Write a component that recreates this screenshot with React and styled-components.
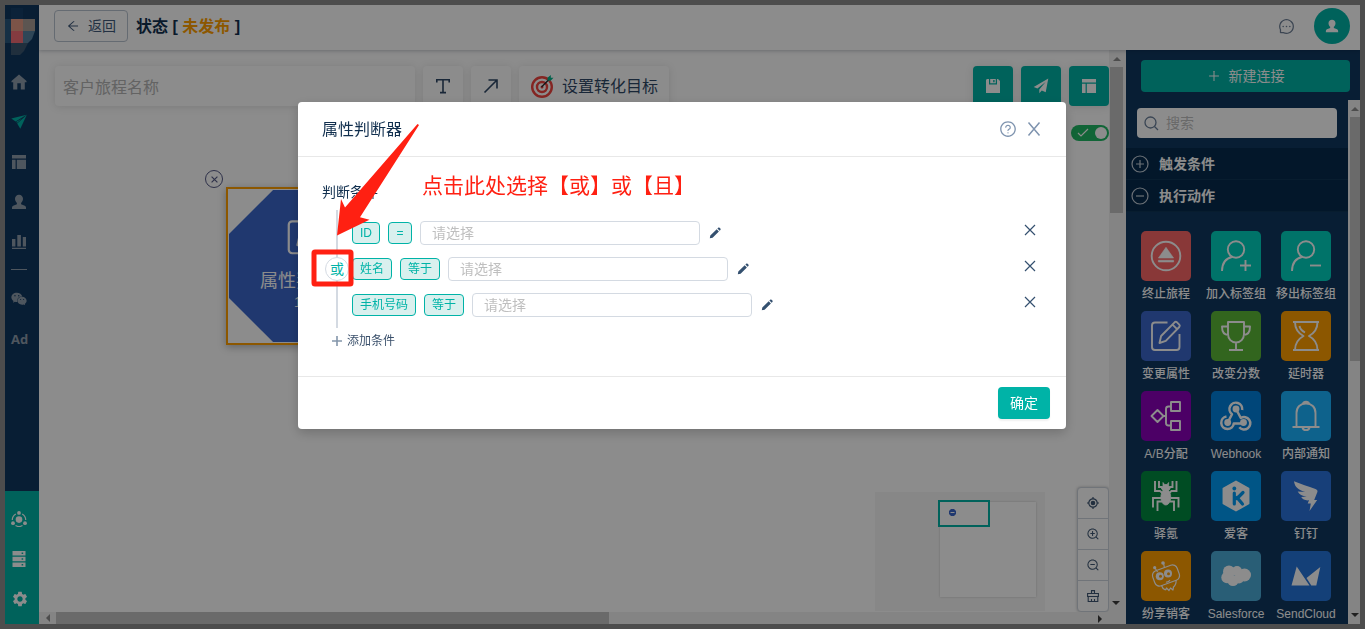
import React from 'react'
import styled, { createGlobalStyle, css } from 'styled-components'
import {
  AiOutlineArrowLeft,
  AiOutlineMessage,
  AiOutlinePlus,
  AiOutlineQuestionCircle,
  AiOutlineZoomIn,
  AiOutlineZoomOut
} from 'react-icons/ai'
import { FaWeixin } from 'react-icons/fa'
import { MdSettings } from 'react-icons/md'

const colors = {
  teal: '#00b3a7',
  navy: '#103860',
  navyDark: '#072b4d',
  orange: '#ff9f00',
  text: '#12304f',
  line: '#d4dae2',
  red: '#ff2012'
}

const GlobalStyle = createGlobalStyle`
  * {
    box-sizing: border-box;
  }

  body {
    margin: 0;
    color: ${colors.text};
    font-family: 'Liberation Sans', 'Noto Sans CJK SC', sans-serif;
    font-size: 14px;
    line-height: 22px;
  }

  button,
  input {
    font: inherit;
  }

  button {
    margin: 0;
    padding: 0;
    border: 0;
    background: none;
    cursor: pointer;
  }

  svg {
    display: block;
    flex: none;
  }
`

/* ---------- icons ---------- */

const HomeIcon = () => (
  <svg width="16" height="16" viewBox="0 0 16 16" fill="currentColor">
    <path d="M8 .5 15.5 7v1.2h-1.7V15.5H9.8V9.2H6.3v6.3H2.2V8.2H.5V7z" />
  </svg>
)

const PlaneIcon = () => (
  <svg width="16" height="16" viewBox="0 0 16 16" fill="currentColor">
    <path d="M15.7.8.3 4.6l4.3 2.9z" />
    <path d="M15.7 1 9.3 14.8 6.2 9.6z" />
    <path d="m5 8 6-3.6-4.8 4.4z" />
  </svg>
)

const SendIcon = () => (
  <svg width="16" height="16" viewBox="0 0 16 16" fill="currentColor">
    <path d="M15.3.6.7 8.9l3.7 1.7L12.6 4l-6.3 7.5v3.8l2.5-2.7 3.9 1.7z" />
  </svg>
)

const LayoutIcon = () => (
  <svg width="16" height="16" viewBox="0 0 16 16" fill="currentColor">
    <path d="M1 1h14v3.6H1zM1 5.8h3.6V15H1zM5.8 5.8H15V15H5.8z" />
  </svg>
)

const UserIcon = ({ size = 16 }) => (
  <svg width={size} height={size} viewBox="0 0 16 16" fill="currentColor">
    <path d="M8 .8c2.4 0 4 1.7 4 4 0 1.800-.8 3.100-1.900 4.100v1.300l3.700 1.600c.8.400 1.200 1 1.200 1.800V15H1v-1.400c0-.8.400-1.400 1.200-1.800l3.700-1.600V8.900C4.800 7.900 4 6.600 4 4.800c0-2.300 1.600-4 4-4z" />
  </svg>
)

const ChartIcon = () => (
  <svg width="16" height="16" viewBox="0 0 16 16" fill="currentColor">
    <path d="M1 5h3.400v7.500H1zM6.300 1h3.600v11.500H6.300zM11.800 3H15v9.500h-3.200zM1 13.800h14V15H1z" />
  </svg>
)

const HubIcon = () => (
  <svg width="16" height="16" viewBox="0 0 16 16" fill="currentColor">
    <circle cx="8" cy="8.600" r="3.300" />
    <circle cx="8" cy="1.900" r="1.900" />
    <circle cx="2" cy="12.200" r="1.900" />
    <circle cx="14" cy="12.200" r="1.900" />
    <path
      d="M1.300 8.900a6.800 6.800 0 0 1 3.500-6M14.700 8.900a6.800 6.800 0 0 0-3.500-6M4.500 14.500a6.800 6.800 0 0 0 7 0"
      fill="none"
      stroke="currentColor"
      strokeWidth="1.200"
    />
  </svg>
)

const ServerIcon = () => (
  <svg width="16" height="16" viewBox="0 0 16 16" fill="currentColor" fillRule="evenodd">
    <path d="M1.500 0h13v4.400h-13zM10.600 1.500v1.400h1.600V1.500zM1.500 5.800h13v4.400h-13zM10.600 7.300v1.400h1.600V7.300zM1.500 11.600h13V16h-13zM10.600 13.100v1.400h1.600v-1.400z" />
  </svg>
)

const SaveIcon = () => (
  <svg width="16" height="16" viewBox="0 0 16 16" fill="currentColor">
    <path d="M1 2.500C1 1.600 1.600 1 2.500 1H4v5.500h8V1h1l2 2v12H1z" />
    <path d="M5.200 1h5.600v4.300H5.200zM8.200 2v2.200h1.400V2z" fillRule="evenodd" />
  </svg>
)

const TextIcon = () => (
  <svg width="16" height="16" viewBox="0 0 16 16" fill="none" stroke="currentColor" strokeWidth="1.600">
    <path d="M1.800 4.500V1.800h12.400v2.700M8 1.800v12.800M5 14.600h6" />
  </svg>
)

const DiagonalIcon = () => (
  <svg width="16" height="16" viewBox="0 0 16 16" fill="none" stroke="currentColor" strokeWidth="1.600">
    <path d="M1.500 14.500 14 2M5.500 2H14v8.500" />
  </svg>
)

const TargetIcon = () => (
  <svg width="24" height="24" viewBox="0 0 24 24" fill="none">
    <circle cx="12" cy="13" r="9.800" stroke="#f0443f" strokeWidth="2.400" />
    <circle cx="12" cy="13" r="5" stroke="#f0443f" strokeWidth="2.400" />
    <circle cx="12" cy="13" r="1.500" fill="#f0443f" />
    <path d="M11.500 13 20 4.500" stroke="#20252b" strokeWidth="1.200" />
    <path d="M17.500 6.500V3.800L20.800 1v2.700h2.700l-2.900 3.100z" fill="#00b38a" />
  </svg>
)

const SearchIcon = () => (
  <svg width="15" height="15" viewBox="0 0 15 15" fill="none" stroke="currentColor" strokeWidth="1.300">
    <circle cx="6.500" cy="6.500" r="5.500" />
    <path d="m10.500 10.500 3.500 3.500" />
  </svg>
)

const CrossIcon = ({ size = 12, width = 1.2 }) => (
  <svg width={size} height={size} viewBox="0 0 12 12" fill="none" stroke="currentColor" strokeWidth={width}>
    <path d="M1 1l10 10M11 1 1 11" />
  </svg>
)

const CloseIcon = () => (
  <svg width="14" height="14" viewBox="0 0 14 14" fill="none" stroke="currentColor" strokeWidth="1.500">
    <path d="M1.500.5l11 13M12.500.5l-11 13" />
  </svg>
)

const PlusIcon = () => (
  <svg width="12" height="12" viewBox="0 0 12 12" fill="none" stroke="currentColor" strokeWidth="1.600">
    <path d="M6 1v10M1 6h10" />
  </svg>
)

const PencilIcon = () => (
  <svg width="12" height="12" viewBox="0 0 12 12" fill="currentColor">
    <path d="M.8 11.300 1.300 8.500 7.700 2.200l2.200 2.200-6.300 6.300zM8.400 1.500l.8-.8c.4-.4.900-.4 1.300 0l.9.900c.4.400.4.900 0 1.300l-.8.800z" />
  </svg>
)

const LocateIcon = () => (
  <svg width="14" height="14" viewBox="0 0 14 14" fill="none" stroke="currentColor" strokeWidth="1.200">
    <circle cx="7" cy="7" r="4.200" />
    <circle cx="7" cy="7" r="1.700" fill="currentColor" />
    <path d="M7 1v2M7 11v2M1 7h2M11 7h2" />
  </svg>
)

const BrushIcon = () => (
  <svg width="14" height="14" viewBox="0 0 14 14" fill="none" stroke="currentColor" strokeWidth="1.100">
    <path d="M5.500 4.500V1.600h3v2.900M1.600 4.500h10.800v3H1.600zM2.200 7.500v5h9.600v-5M5.500 10v2.500M8.500 10v2.500" />
  </svg>
)

const CircleIcon = ({ plus }) => (
  <svg width="18" height="18" viewBox="0 0 18 18" fill="none" stroke="currentColor" strokeWidth="1.200">
    <circle cx="9" cy="9" r="8" />
    <path d={plus ? 'M5 9h8M9 5v8' : 'M5 9h8'} />
  </svg>
)

const TileIcon = ({ size = 50, children }) => (
  <svg
    width={size}
    height={size}
    viewBox="0 0 50 50"
    fill="none"
    stroke="#fff"
    strokeWidth="1.900"
    strokeLinejoin="round"
  >
    {children}
  </svg>
)

const personShape = (
  <>
    <circle cx="25" cy="18.500" r="8.200" />
    <path d="M11 40c0-7.500 4-12.800 10.500-14.300" />
  </>
)

const editShape = (
  <>
    <path d="M26.500 11.500H14a3 3 0 0 0-3 3V36a3 3 0 0 0 3 3h21.500a3 3 0 0 0 3-3V23" />
    <path d="m18.500 32 1.600-7L33.600 11.300q1.200-1 2.400 0l2.300 2.300q1 1.200 0 2.400L24.800 29.800zM31.500 13.600l4.600 4.600" />
  </>
)

const actions = [
  {
    label: '终止旅程',
    color: '#fa6666',
    icon: (
      <>
        <circle cx="25" cy="25" r="14.300" />
        <path d="M25 16.300 32.600 27H17.400zM17.400 29.300h15.200v1.700H17.400z" fill="#fff" strokeWidth="0.600" />
      </>
    )
  },
  {
    label: '加入标签组',
    color: '#00d1bf',
    icon: (
      <>
        {personShape}
        <path d="M29 34.500h11M34.500 29v11" />
      </>
    )
  },
  {
    label: '移出标签组',
    color: '#00d1bf',
    icon: (
      <>
        {personShape}
        <path d="M29 34.500h11" />
      </>
    )
  },
  { label: '变更属性', color: '#3b67cb', icon: editShape },
  {
    label: '改变分数',
    color: '#5cb838',
    icon: (
      <path d="M17 11h16v12c0 5-3.500 8.500-8 8.500S17 28 17 23zM17 15.500h-6c0 5 2 8.500 6.500 8.500M33 15.500h6c0 5-2 8.500-6.500 8.500M25 31.500V39M18 39h14" />
    )
  },
  {
    label: '延时器',
    color: '#ff9f00',
    icon: (
      <path d="M12 11h26M12 39h26M14 11c0 7 3 11 8.500 14-5.500 3-8.500 7-8.500 14M36.500 11c0 7-3 11-8.500 14 5.500 3 8.500 7 8.500 14M18.500 15c.5 3 2.500 5 5.500 6.500" />
    )
  },
  {
    label: 'A/B分配',
    color: '#8a00ba',
    icon: (
      <path d="m16.500 19 6 6-6 6-6-6zM22.500 25H25M30 15.500h-2.500Q25 15.500 25 18v14q0 2.500 2.500 2.500H30M30 11h9v9h-9zM30 30h9v9h-9z" />
    )
  },
  {
    label: 'Webhook',
    color: '#0080dd',
    icon: (
      <>
        <path
          d="M31.200 19a6.400 6.400 0 1 0-10.200 4.200l-4.300 8.300M25 18l4.800 9a6.200 6.200 0 1 1-1.500 9.200M15.500 25.500a6.300 6.300 0 1 0 7.300 7h9.700"
          strokeWidth="2.500"
        />
        <circle cx="25" cy="18" r="2.500" fill="#fff" />
        <circle cx="16.700" cy="31.500" r="2.500" fill="#fff" />
        <circle cx="32.500" cy="31.500" r="2.500" fill="#fff" />
      </>
    )
  },
  {
    label: '内部通知',
    color: '#1ab2ff',
    icon: (
      <path d="M15.500 36V22c0-6 4-9.500 9.500-9.500s9.500 3.500 9.500 9.500v14M11.500 36h27M21.500 36.500c.5 3.500 6.500 3.500 7 0M22 12.500c.5-2.500 5.500-2.500 6 0" />
    )
  },
  {
    label: '驿氪',
    color: '#008a40',
    icon: (
      <>
        <path
          d="M14 10v10h5l3 2.500M18 10v6h2.500l2 3M35.500 10v10h-5l-3 2.500M31.500 10v6H29l-2 3M12 36.500V27h8M16.500 40v-9.500h4.500M37.500 36.500V27h-8M33 40v-9.500h-4.500"
          strokeLinejoin="miter"
        />
        <path
          d="M22 11.500v3l-1.500 3 1.500 2c-2.200 3-2.700 7-1.500 10.500 1 2.500 2.500 4 4.300 4s3.300-1.500 4.300-4c1.200-3.500.7-7.500-1.500-10.500l1.500-2-1.500-3v-3l-1.500 2h-2.600z"
          fill="#fff"
          strokeWidth="0.800"
        />
      </>
    )
  },
  {
    label: '爱客',
    color: '#009bf5',
    icon: (
      <>
        <path d="M25 10.500 37.500 17.500v15L25 39.500 12.500 32.500v-15z" fill="#fff" />
        <circle cx="23.300" cy="17.500" r="1.900" fill="#009bf5" stroke="none" />
        <path d="M23.300 22v11M32 21.500l-6 6M26 26.500l5.500 6.500" stroke="#009bf5" strokeWidth="3.200" strokeLinecap="round" />
      </>
    )
  },
  {
    label: '钉钉',
    color: '#2a73dd',
    icon: (
      <path
        d="M13 10.300c7 3 14 5 21.500 7.700 1.600.6 2.400 1.800 1.800 3.300L33.200 29h3L28.500 40l1.300-7.500h-3.100l1.300-3.200c-3.700.4-6.200-.7-7.800-3.200l5.500-.6c-4.500-.4-7.500-1.900-9-5l7.500.5C17.500 19 13.700 16.200 13 10.300z"
        fill="#fff"
        stroke="none"
      />
    )
  },
  {
    label: '纷享销客',
    color: '#ff9f00',
    icon: (
      <>
        <rect x="12" y="16.500" width="26" height="16" rx="5" transform="rotate(-20 25 24.500)" strokeWidth="1.200" />
        <path d="m14 17 2.500 4M22.500 12l1 5M20.500 34.500c.5 2 2 3.500 4 4.500M35 29c.5 3-.5 5.500-3 7.500M24.500 39l1-2 2.500 2.500 1.500-2.500 2.500 2 .500-3M25 31c1.500.3 3-.3 4-1.800" strokeWidth="1.200" />
        <circle cx="13.700" cy="16.700" r="1.600" fill="#fff" stroke="none" />
        <circle cx="22" cy="12" r="1.800" fill="#fff" stroke="none" />
        <circle cx="18.800" cy="25.300" r="4" fill="#fff" stroke="none" />
        <circle cx="27" cy="22.500" r="4" fill="#fff" stroke="none" />
        <circle cx="19.500" cy="25.300" r="1.500" fill="#ff9f00" stroke="none" />
        <circle cx="27.500" cy="22.800" r="1.500" fill="#ff9f00" stroke="none" />
      </>
    )
  },
  {
    label: 'Salesforce',
    color: '#4cabd8',
    icon: (
      <g fill="#fff" stroke="none">
        <circle cx="18" cy="20.500" r="6" />
        <circle cx="26" cy="20" r="5" />
        <circle cx="33.500" cy="24" r="6.500" />
        <circle cx="16" cy="26.500" r="5.700" />
        <circle cx="22" cy="29.500" r="5.600" />
        <circle cx="28" cy="27.500" r="5" />
      </g>
    )
  },
  {
    label: 'SendCloud',
    color: '#2675da',
    icon: <path d="m15.700 15.500 12.800 19h-18zM39.300 16 35.300 34.500h-5L25.500 27z" fill="#fff" stroke="none" />
  }
]

/* ---------- shell ---------- */

const Shell = styled.div`
  display: flex;
  height: 100vh;
  border: 5px solid #8c8c8c;
  background-color: #fff;
  overflow: hidden;
`

const Sidebar = styled.nav`
  display: flex;
  flex-direction: column;
  width: 34px;
  background-color: ${colors.navy};
  color: #8f9dac;
`

const Logo = styled.div`
  height: 57px;

  svg {
    width: 34px;
    height: 57px;
  }
`

const SideItem = styled.a`
  display: flex;
  align-items: center;
  height: 40px;
  padding: 0 6px;
  color: ${props => (props.$active ? colors.teal : 'inherit')};
  font: bold 13px 'Open Sans', 'Liberation Sans', sans-serif;
  text-decoration: none;
`

const SideDivider = styled.div`
  width: 16px;
  height: 1px;
  margin: 7px 6px 9px;
  background-color: currentColor;
`

const SideFooter = styled.div`
  margin-top: auto;
  padding: 8px 0 5px;
  background-color: ${colors.teal};
  color: #fff;
`

const Main = styled.div`
  display: flex;
  flex: 1;
  flex-direction: column;
  min-width: 0;
`

const Header = styled.header`
  display: flex;
  align-items: center;
  z-index: 1;
  height: 45px;
  padding: 0 10px 3px 15px;
  box-shadow: 0 1px 4px rgba(0, 21, 41, 0.25);
`

const BackButton = styled.button`
  display: flex;
  align-items: center;
  gap: 8px;
  height: 32px;
  padding: 0 11px;
  border: 1px solid #b9c3cf;
  border-radius: 4px;
  color: #40597a;
`

const Status = styled.h1`
  flex: 1;
  margin: 0 0 0 8px;
  padding-top: 2px;
  font-size: 16px;
  font-weight: bold;

  span {
    color: ${colors.orange};
  }
`

const ChatButton = styled.button`
  margin-right: 19px;
  color: #6e7f96;
`

const Avatar = styled.button`
  display: flex;
  align-items: center;
  justify-content: center;
  width: 36px;
  height: 36px;
  border-radius: 50%;
  background-color: ${colors.teal};
  color: #fff;
`

const Body = styled.div`
  display: flex;
  flex: 1;
  min-height: 0;
`

/* ---------- canvas ---------- */

const Workspace = styled.main`
  display: grid;
  flex: 1;
  grid-template-columns: 1fr 17px;
  grid-template-rows: 1fr 12px;
  min-width: 0;
`

const Canvas = styled.section`
  position: relative;
  min-width: 0;
  padding: 16px 0 0 16px;
  overflow: hidden;
`

const Toolbar = styled.div`
  display: flex;
  gap: 8px;
`

const raised = css`
  height: 40px;
  border-radius: 4px;
  box-shadow: 0 1px 8px rgba(0, 0, 0, 0.12);
`

const NameInput = styled.input`
  ${raised}
  width: 360px;
  padding: 3px 8px 0;
  border: 0;
  font-size: 16px;

  &::placeholder {
    color: #b4b4b4;
  }
`

const ToolButton = styled.button`
  ${raised}
  display: flex;
  align-items: center;
  justify-content: center;
  gap: 8px;
  min-width: 40px;
  padding: 0 ${props => (props.$wide ? 11 : 0)}px;
  background-color: ${props => (props.$primary ? colors.teal : '#fff')};
  color: ${props => (props.$primary ? '#fff' : '#2f4866')};
  font-size: 16px;
`

const ToolLabel = styled.span`
  padding-top: 2px;
`

const Spacer = styled.div`
  flex: 1;
`

const SwitchRow = styled.div`
  display: flex;
  justify-content: flex-end;
  margin-top: 19px;
`

const Switch = styled.input`
  appearance: none;
  display: flex;
  align-items: center;
  justify-content: flex-end;
  width: 38px;
  height: 16px;
  margin: 0;
  padding: 2px;
  border-radius: 8px;
  background: #1fb864
    url("data:image/svg+xml,%3Csvg xmlns='http://www.w3.org/2000/svg' width='12' height='10' fill='none' stroke='white' stroke-width='1.2'%3E%3Cpath d='M1 5l3 3 7-7'/%3E%3C/svg%3E")
    no-repeat 6px 3px;

  &::after {
    width: 12px;
    height: 12px;
    border-radius: 50%;
    background-color: #fff;
    content: '';
  }
`

const NodeBox = styled.div`
  position: absolute;
  top: 137px;
  left: 187px;
  padding: 1px;
  border: 2px solid ${colors.orange};
  box-shadow: 0 2px 8px rgba(0, 0, 0, 0.3);
`

const NodeShape = styled.div`
  display: flex;
  flex-direction: column;
  align-items: center;
  width: 152px;
  height: 152px;
  padding-top: 18px;
  background-color: #3b67cb;
  clip-path: polygon(29% 0, 71% 0, 100% 29%, 100% 71%, 71% 100%, 29% 100%, 0 71%, 0 29%);
  color: #fff;
  font-size: 18px;

  svg {
    margin-bottom: 4px;
  }

  small {
    font-size: 14px;
    line-height: 20px;
  }
`

const NodeClose = styled.button`
  position: absolute;
  top: 120px;
  left: 166px;
  display: flex;
  align-items: center;
  justify-content: center;
  width: 18px;
  height: 18px;
  border: 1px solid #555a86;
  border-radius: 50%;
  color: #555a86;
`

const Minimap = styled.div`
  position: absolute;
  right: 64px;
  bottom: 1px;
  width: 170px;
  height: 119px;
  padding: 10px 9px 14px 65px;
  background-color: #f6f6f6;
`

const MinimapPage = styled.div`
  height: 95px;
  background-color: #fff;
  box-shadow: 0 0 2px rgba(0, 0, 0, 0.2);
`

const MinimapView = styled.div`
  position: absolute;
  top: 8px;
  left: 63px;
  width: 52px;
  height: 27px;
  padding: 7px 9px;
  border: 2px solid ${colors.teal};
`

const ZoomBar = styled.div`
  position: absolute;
  right: 0;
  bottom: 0;
  border: 1px solid #ccd3dc;
  border-radius: 4px;
  background-color: #fff;
  box-shadow: 0 0 3px rgba(0, 0, 0, 0.25);

  button {
    display: flex;
    align-items: center;
    justify-content: center;
    width: 30px;
    height: 30px;
    color: #3f5773;
  }

  button + button {
    height: 31px;
    border-top: 1px solid #ccd3dc;
  }
`

const ScrollTrack = styled.div`
  display: flex;
  flex: none;
  flex-direction: ${props => (props.$horizontal ? 'row' : 'column')};
  align-items: center;
  justify-content: space-between;
  width: ${props => props.$width || 'auto'};
  padding: ${props => props.$pad || 0};
  background-color: #f0f0f0;
`

const ScrollThumb = styled.div`
  flex: none;
  width: ${props => props.$width};
  height: ${props => props.$height};
  margin: ${props => (props.$horizontal ? '0 auto 0 0' : '0 0 auto')};
  background-color: #c1c1c1;
`

const Arrow = styled.div`
  display: flex;
  flex: none;
  align-items: center;
  justify-content: center;
  width: 17px;
  height: 17px;
  color: ${props => (props.$dim ? '#8c8c8c' : '#3c3c3c')};
  rotate: ${props => props.$turn || 0}deg;
`

const ArrowMark = ({ turn, dim }) => (
  <Arrow $turn={turn} $dim={dim}>
    <svg width="8" height="4" viewBox="0 0 8 4" fill="currentColor">
      <path d="M4 0l4 4H0z" />
    </svg>
  </Arrow>
)

/* ---------- right panel ---------- */

const Panel = styled.aside`
  display: flex;
  flex-direction: column;
  width: 234px;
  background-color: ${colors.navy};
  color: #fff;
`

const NewButton = styled.button`
  display: flex;
  align-items: center;
  justify-content: center;
  gap: 8px;
  flex: none;
  height: 32px;
  margin: 10px 10px 8px 15px;
  border-radius: 4px;
  background-color: ${colors.teal};
  color: #fff;
`

const PanelScroll = styled.div`
  display: flex;
  flex: 1;
  min-height: 0;
  overflow: hidden;
`

const PanelList = styled.div`
  flex: 1;
  min-width: 0;
`

const SearchBox = styled.label`
  display: flex;
  align-items: center;
  gap: 7px;
  height: 30px;
  margin: 8px 11px 10px;
  padding: 0 7px;
  border-radius: 4px;
  background-color: #fff;
  color: #6a7f99;

  input {
    flex: 1;
    min-width: 0;
    padding: 0;
    border: 0;
    outline: 0;
    background: none;
  }

  input::placeholder {
    color: #bfbfbf;
  }
`

const GroupButton = styled.button`
  display: flex;
  align-items: center;
  gap: 10px;
  width: 100%;
  height: 32px;
  padding: 0 5px;
  border-bottom: 1px solid #103556;
  background-color: ${colors.navyDark};
  color: #fff;
  font-weight: bold;

  svg {
    color: #c3cdd8;
  }
`

const ActionGrid = styled.div`
  display: grid;
  grid-template-columns: repeat(3, 1fr);
  gap: 7px 0;
  padding: 19px 7px 0 5px;
`

const Action = styled.button`
  display: flex;
  flex-direction: column;
  align-items: center;
  gap: 3px;
  color: #fff;
  font-size: 12px;
  font-weight: 500;
  line-height: 20px;
  white-space: nowrap;
`

const Tile = styled.span`
  border-radius: 5px;
  background-color: ${props => props.$color};
`

/* ---------- modal ---------- */

const Overlay = styled.div`
  position: fixed;
  inset: 0;
  z-index: 10;
  display: flex;
  align-items: flex-start;
  justify-content: center;
  padding: 102px 1px 0 0;
  background-color: rgba(0, 0, 0, 0.45);
`

const Modal = styled.div`
  position: relative;
  width: 768px;
  max-width: 100%;
  border-radius: 4px;
  background-color: #fff;
  box-shadow: 0 4px 12px rgba(0, 0, 0, 0.2);
`

const ModalHeader = styled.div`
  display: flex;
  align-items: center;
  gap: 10px;
  height: 55px;
  padding: 0 25px 0 24px;
  border-bottom: 1px solid #e8e8e8;

  h2 {
    flex: 1;
    margin: 0;
    padding-top: 2px;
    font-size: 16px;
    font-weight: normal;
  }

  button {
    color: #7f94af;
  }
`

const ModalBody = styled.div`
  padding: 24px;
`

const Conditions = styled.div`
  position: relative;
  display: flex;
  flex-direction: column;
  gap: 12px;
  margin: 7px 0 2px 14px;
  padding: 11px 0;
  border-left: 2px solid ${colors.line};
`

const ConditionRow = styled.div`
  display: flex;
  align-items: center;
  gap: 8px;
  padding: 0 6px 0 14px;
`

const Tag = styled.button`
  min-width: 24px;
  height: 22px;
  padding: 0 7px;
  border: 1px solid ${colors.teal};
  border-radius: 4px;
  background-color: #d9f0ee;
  color: ${colors.teal};
  font-size: 12px;
  line-height: 20px;
`

const ValueInput = styled.input`
  width: 280px;
  height: 24px;
  padding: 0 11px;
  border: 1px solid ${colors.line};
  border-radius: 4px;

  &::placeholder {
    color: #bfbfbf;
  }
`

const EditButton = styled.button`
  margin-left: 1px;
  color: #34506f;
`

const RemoveButton = styled.button`
  align-self: flex-start;
  margin: 3px 0 0 auto;
  color: #34506f;
`

const Relation = styled.button`
  position: absolute;
  top: 47px;
  left: -13px;
  width: 24px;
  height: 24px;
  border: 1px solid ${colors.line};
  border-radius: 50%;
  background-color: #fff;
  color: ${colors.teal};
  line-height: 22px;
`

const AddButton = styled.button`
  display: flex;
  align-items: center;
  gap: 4px;
  margin-left: 9px;
  color: #3a506b;
  font-size: 12px;

  svg {
    color: #8496ab;
  }
`

const ModalFooter = styled.div`
  display: flex;
  justify-content: flex-end;
  padding: 10px 16px;
  border-top: 1px solid #e8e8e8;
`

const OkButton = styled.button`
  height: 32px;
  padding: 0 12px;
  border-radius: 4px;
  background-color: ${colors.teal};
  box-shadow: 0 2px 2px rgba(0, 0, 0, 0.06);
  color: #fff;
`

const Note = styled.p`
  position: absolute;
  top: 70px;
  left: 124px;
  margin: 0;
  color: ${colors.red};
  font-size: 21px;
  line-height: 28px;
`

const NoteMark = styled.svg`
  position: absolute;
  top: 20px;
  left: 12px;
  pointer-events: none;
`

const conditions = [
  { field: 'ID', operator: '=' },
  { field: '姓名', operator: '等于' },
  { field: '手机号码', operator: '等于' }
]

const sideIcons = [
  { label: '首页', icon: <HomeIcon /> },
  { label: '旅程', icon: <PlaneIcon />, active: true },
  { label: '页面', icon: <LayoutIcon /> },
  { label: '客户', icon: <UserIcon /> },
  { label: '报表', icon: <ChartIcon /> }
]

const footerIcons = [
  { label: '集成', icon: <HubIcon /> },
  { label: '数据', icon: <ServerIcon /> },
  { label: '设置', icon: <MdSettings size={18} /> }
]

const SideNav = () => (
  <Sidebar>
    <Logo>
      <svg viewBox="0 0 34 57">
        <path d="M0 14h6v24H0z" fill="#28587f" />
        <path d="M6 3h12v11H6z" fill="#143f68" />
        <path d="M6 14h12v12H6z" fill="#e29a83" />
        <path d="M18 14h12v12H18z" fill="#a89c94" />
        <path d="M6 26h12v12H6z" fill="#f06c76" />
        <path d="M18 26h12l-3 8-4 4h-5z" fill="#56809f" />
        <path d="M6 38h17l-4 8-4 4H6z" fill="#3b5670" />
      </svg>
    </Logo>
    {sideIcons.map(item => (
      <SideItem key={item.label} href="#" aria-label={item.label} $active={item.active}>
        {item.icon}
      </SideItem>
    ))}
    <SideDivider />
    <SideItem href="#" aria-label="微信">
      <FaWeixin size={16} />
    </SideItem>
    <SideItem href="#">Ad</SideItem>
    <SideFooter>
      {footerIcons.map(item => (
        <SideItem key={item.label} href="#" aria-label={item.label}>
          {item.icon}
        </SideItem>
      ))}
    </SideFooter>
  </Sidebar>
)

const JourneyCanvas = () => (
  <Workspace>
    <Canvas>
      <Toolbar>
        <NameInput placeholder="客户旅程名称" aria-label="客户旅程名称" />
        <ToolButton aria-label="文本">
          <TextIcon />
        </ToolButton>
        <ToolButton aria-label="连线">
          <DiagonalIcon />
        </ToolButton>
        <ToolButton $wide>
          <TargetIcon />
          <ToolLabel>设置转化目标</ToolLabel>
        </ToolButton>
        <Spacer />
        <ToolButton $primary aria-label="保存">
          <SaveIcon />
        </ToolButton>
        <ToolButton $primary aria-label="发布">
          <SendIcon />
        </ToolButton>
        <ToolButton $primary aria-label="模板">
          <LayoutIcon />
        </ToolButton>
      </Toolbar>
      <SwitchRow>
        <Switch type="checkbox" aria-label="显示" defaultChecked />
      </SwitchRow>
      <NodeClose aria-label="删除节点">
        <CrossIcon size={7} width={2} />
      </NodeClose>
      <NodeBox>
        <NodeShape>
          <TileIcon size={58}>{editShape}</TileIcon>
          属性判断器
          <small>1个</small>
        </NodeShape>
      </NodeBox>
      <Minimap>
        <MinimapPage />
        <MinimapView>
          <svg width="7" height="7" viewBox="0 0 7 7">
            <path d="M2 0h3l2 2v3L5 7H2L0 5V2z" fill="#3b67cb" />
            <path d="M1.500 3.500h4" stroke="#fff" />
          </svg>
        </MinimapView>
      </Minimap>
      <ZoomBar>
        <button aria-label="定位">
          <LocateIcon />
        </button>
        <button aria-label="放大">
          <AiOutlineZoomIn size={14} />
        </button>
        <button aria-label="缩小">
          <AiOutlineZoomOut size={14} />
        </button>
        <button aria-label="清空">
          <BrushIcon />
        </button>
      </ZoomBar>
    </Canvas>
    <ScrollTrack $pad="0 2px 0 0">
      <ArrowMark dim />
      <ScrollThumb $width="13px" $height="146px" />
      <ArrowMark turn={180} />
    </ScrollTrack>
    <ScrollTrack $horizontal>
      <ArrowMark turn={-90} dim />
      <ScrollThumb $horizontal $width="553px" $height="12px" />
      <ArrowMark turn={90} />
    </ScrollTrack>
    <ScrollTrack />
  </Workspace>
)

const ActionPanel = () => (
  <Panel>
    <NewButton>
      <AiOutlinePlus size={14} />
      新建连接
    </NewButton>
    <PanelScroll>
      <PanelList>
        <SearchBox>
          <SearchIcon />
          <input placeholder="搜索" aria-label="搜索" />
        </SearchBox>
        <GroupButton>
          <CircleIcon plus />
          触发条件
        </GroupButton>
        <GroupButton>
          <CircleIcon />
          执行动作
        </GroupButton>
        <ActionGrid>
          {actions.map(action => (
            <Action key={action.label}>
              <Tile $color={action.color}>
                <TileIcon>{action.icon}</TileIcon>
              </Tile>
              {action.label}
            </Action>
          ))}
        </ActionGrid>
      </PanelList>
      <ScrollTrack $width="12px" $pad="0 0 0 2px">
        <ArrowMark dim />
        <ScrollThumb $width="10px" $height="244px" />
        <ArrowMark turn={180} />
      </ScrollTrack>
    </PanelScroll>
  </Panel>
)

const ConditionModal = () => (
  <Overlay>
    <Modal role="dialog" aria-labelledby="modal-title">
      <ModalHeader>
        <h2 id="modal-title">属性判断器</h2>
        <button aria-label="帮助">
          <AiOutlineQuestionCircle size={18} />
        </button>
        <button aria-label="关闭">
          <CloseIcon />
        </button>
      </ModalHeader>
      <ModalBody>
        判断条件
        <Conditions>
          {conditions.map(row => (
            <ConditionRow key={row.field}>
              <Tag>{row.field}</Tag>
              <Tag>{row.operator}</Tag>
              <ValueInput placeholder="请选择" aria-label={row.field} />
              <EditButton aria-label="编辑">
                <PencilIcon />
              </EditButton>
              <RemoveButton aria-label="删除">
                <CrossIcon />
              </RemoveButton>
            </ConditionRow>
          ))}
          <Relation>或</Relation>
        </Conditions>
        <AddButton>
          <PlusIcon />
          添加条件
        </AddButton>
      </ModalBody>
      <ModalFooter>
        <OkButton>确定</OkButton>
      </ModalFooter>
      <Note>点击此处选择【或】或【且】</Note>
      <NoteMark width="120" height="170" viewBox="0 0 120 170">
        <path d="M107.500 2 109 3 50 95.300l9.500 2.500L27 113.500 31 77l4 8.500z" fill={colors.red} />
        <rect x="4" y="130" width="37" height="32" rx="1" fill="none" stroke={colors.red} strokeWidth="5" />
      </NoteMark>
    </Modal>
  </Overlay>
)

export default function App() {
  return (
    <>
      <GlobalStyle />
      <Shell>
        <SideNav />
        <Main>
          <Header>
            <BackButton>
              <AiOutlineArrowLeft size={14} />
              返回
            </BackButton>
            <Status>
              状态 [ <span>未发布</span> ]
            </Status>
            <ChatButton aria-label="消息">
              <AiOutlineMessage size={17} />
            </ChatButton>
            <Avatar aria-label="账号">
              <UserIcon size={14} />
            </Avatar>
          </Header>
          <Body>
            <JourneyCanvas />
            <ActionPanel />
          </Body>
        </Main>
      </Shell>
      <ConditionModal />
    </>
  )
}
